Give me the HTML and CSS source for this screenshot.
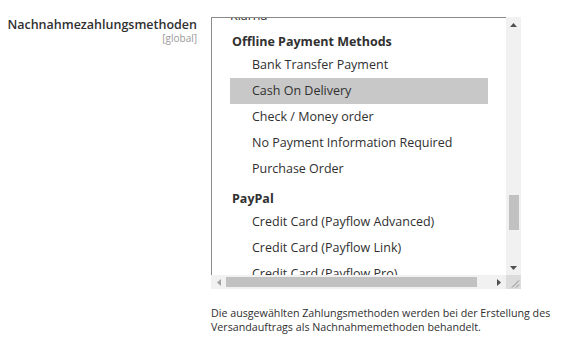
FILE: index.html
```html
<!DOCTYPE html>
<html lang="de">
<head>
<meta charset="utf-8">
<title>Nachnahmezahlungsmethoden</title>
<link rel="stylesheet" href="styles.css">
</head>
<body>
<div class="field">
  <div class="label-col">
    <span class="label">Nachnahmezahlungsmethoden</span>
    <span class="scope">[global]</span>
  </div>
  <div class="control">
    <div class="select">
      <div class="viewport">
        <div class="list">
          <div class="option top">Klarna</div>
          <div class="group first">Offline Payment Methods</div>
          <div class="option">Bank Transfer Payment</div>
          <div class="option selected">Cash On Delivery</div>
          <div class="option">Check / Money order</div>
          <div class="option">No Payment Information Required</div>
          <div class="option">Purchase Order</div>
          <div class="group">PayPal</div>
          <div class="option">Credit Card (Payflow Advanced)</div>
          <div class="option">Credit Card (Payflow Link)</div>
          <div class="option">Credit Card (Payflow Pro)</div>
        </div>
      </div>
      <div class="vscroll">
        <div class="sb-btn"><svg width="7" height="4" viewBox="0 0 7 4"><polygon points="0,4 7,4 3.5,0" fill="#505050"/></svg></div>
        <div class="vtrack"><div class="vthumb"></div></div>
        <div class="sb-btn"><svg width="7" height="4" viewBox="0 0 7 4"><polygon points="0,0 7,0 3.5,4" fill="#505050"/></svg></div>
      </div>
      <div class="hscroll">
        <div class="sb-btn h"><svg width="4" height="7" viewBox="0 0 4 7"><polygon points="4,0 4,7 0,3.5" fill="#a3a3a3"/></svg></div>
        <div class="htrack"><div class="hthumb"></div></div>
        <div class="sb-btn h"><svg width="4" height="7" viewBox="0 0 4 7"><polygon points="0,0 0,7 4,3.5" fill="#505050"/></svg></div>
      </div>
      <div class="corner"><svg width="15" height="14" viewBox="0 0 15 14"><path d="M6 12.5 L13 5.5 M10 12.5 L13 9.5" stroke="#8a8a8a" stroke-width="1"/></svg></div>
    </div>
    <p class="note">Die ausgewählten Zahlungsmethoden werden bei der Erstellung des Versandauftrags als Nachnahmemethoden behandelt.</p>
  </div>
</div>
</body>
</html>
```
FILE: styles.css
```css
html, body {
  margin: 0;
  padding: 0;
  background: #ffffff;
}

body {
  font-family: "Open Sans", "Liberation Sans", sans-serif;
  color: #303030;
}

.field {
  display: flex;
  gap: 14px;
  padding-top: 17px;
}

.label-col {
  width: 197px;
  display: flex;
  flex-direction: column;
  align-items: flex-end;
}

.label {
  font-size: 12.5px;
  font-weight: 600;
  line-height: 16px;
  color: #303030;
}

.scope {
  font-size: 10px;
  line-height: 10px;
  margin-top: 0;
  color: #999999;
}

.control {
  width: 353px;
}

.select {
  width: 310px;
  height: 272px;
  display: grid;
  grid-template-columns: 295px 15px;
  grid-template-rows: 258px 14px;
}

.viewport {
  border-top: 1px solid #8a8a8a;
  border-left: 1px solid #8a8a8a;
  overflow: hidden;
  background: #fff;
}

.list {
  margin-top: -15px;
  padding: 0 18px;
  font-size: 12.5px;
  white-space: nowrap;
}

.option {
  height: 26px;
  line-height: 26px;
  padding-left: 22px;
}

.option.top {
  padding-left: 0;
}

.option.selected {
  background: #c8c8c8;
}

.group {
  margin-top: 7px;
  height: 20px;
  line-height: 20px;
  padding-left: 2px;
  font-weight: 700;
}

.group.first {
  margin-top: 3px;
}

.vscroll {
  background: #f1f1f1;
  display: flex;
  flex-direction: column;
}

.sb-btn {
  height: 15px;
  display: flex;
  align-items: center;
  justify-content: center;
  flex: none;
}

.sb-btn.h {
  height: 14px;
  width: 15px;
}

.vtrack {
  flex: 1;
}

.vthumb {
  margin: 163px 2px 0 3px;
  height: 35px;
  background: #c1c1c1;
}

.hscroll {
  background: #f1f1f1;
  display: flex;
  align-items: stretch;
}

.htrack {
  flex: 1;
  display: flex;
  align-items: center;
}

.hthumb {
  width: 251px;
  height: 10px;
  background: #c1c1c1;
}

.corner {
  background: #dcdcdc;
  display: flex;
}

.note {
  margin: 17px 0 0 0;
  font-size: 10.7px;
  line-height: 14px;
  color: #303030;
}
```
